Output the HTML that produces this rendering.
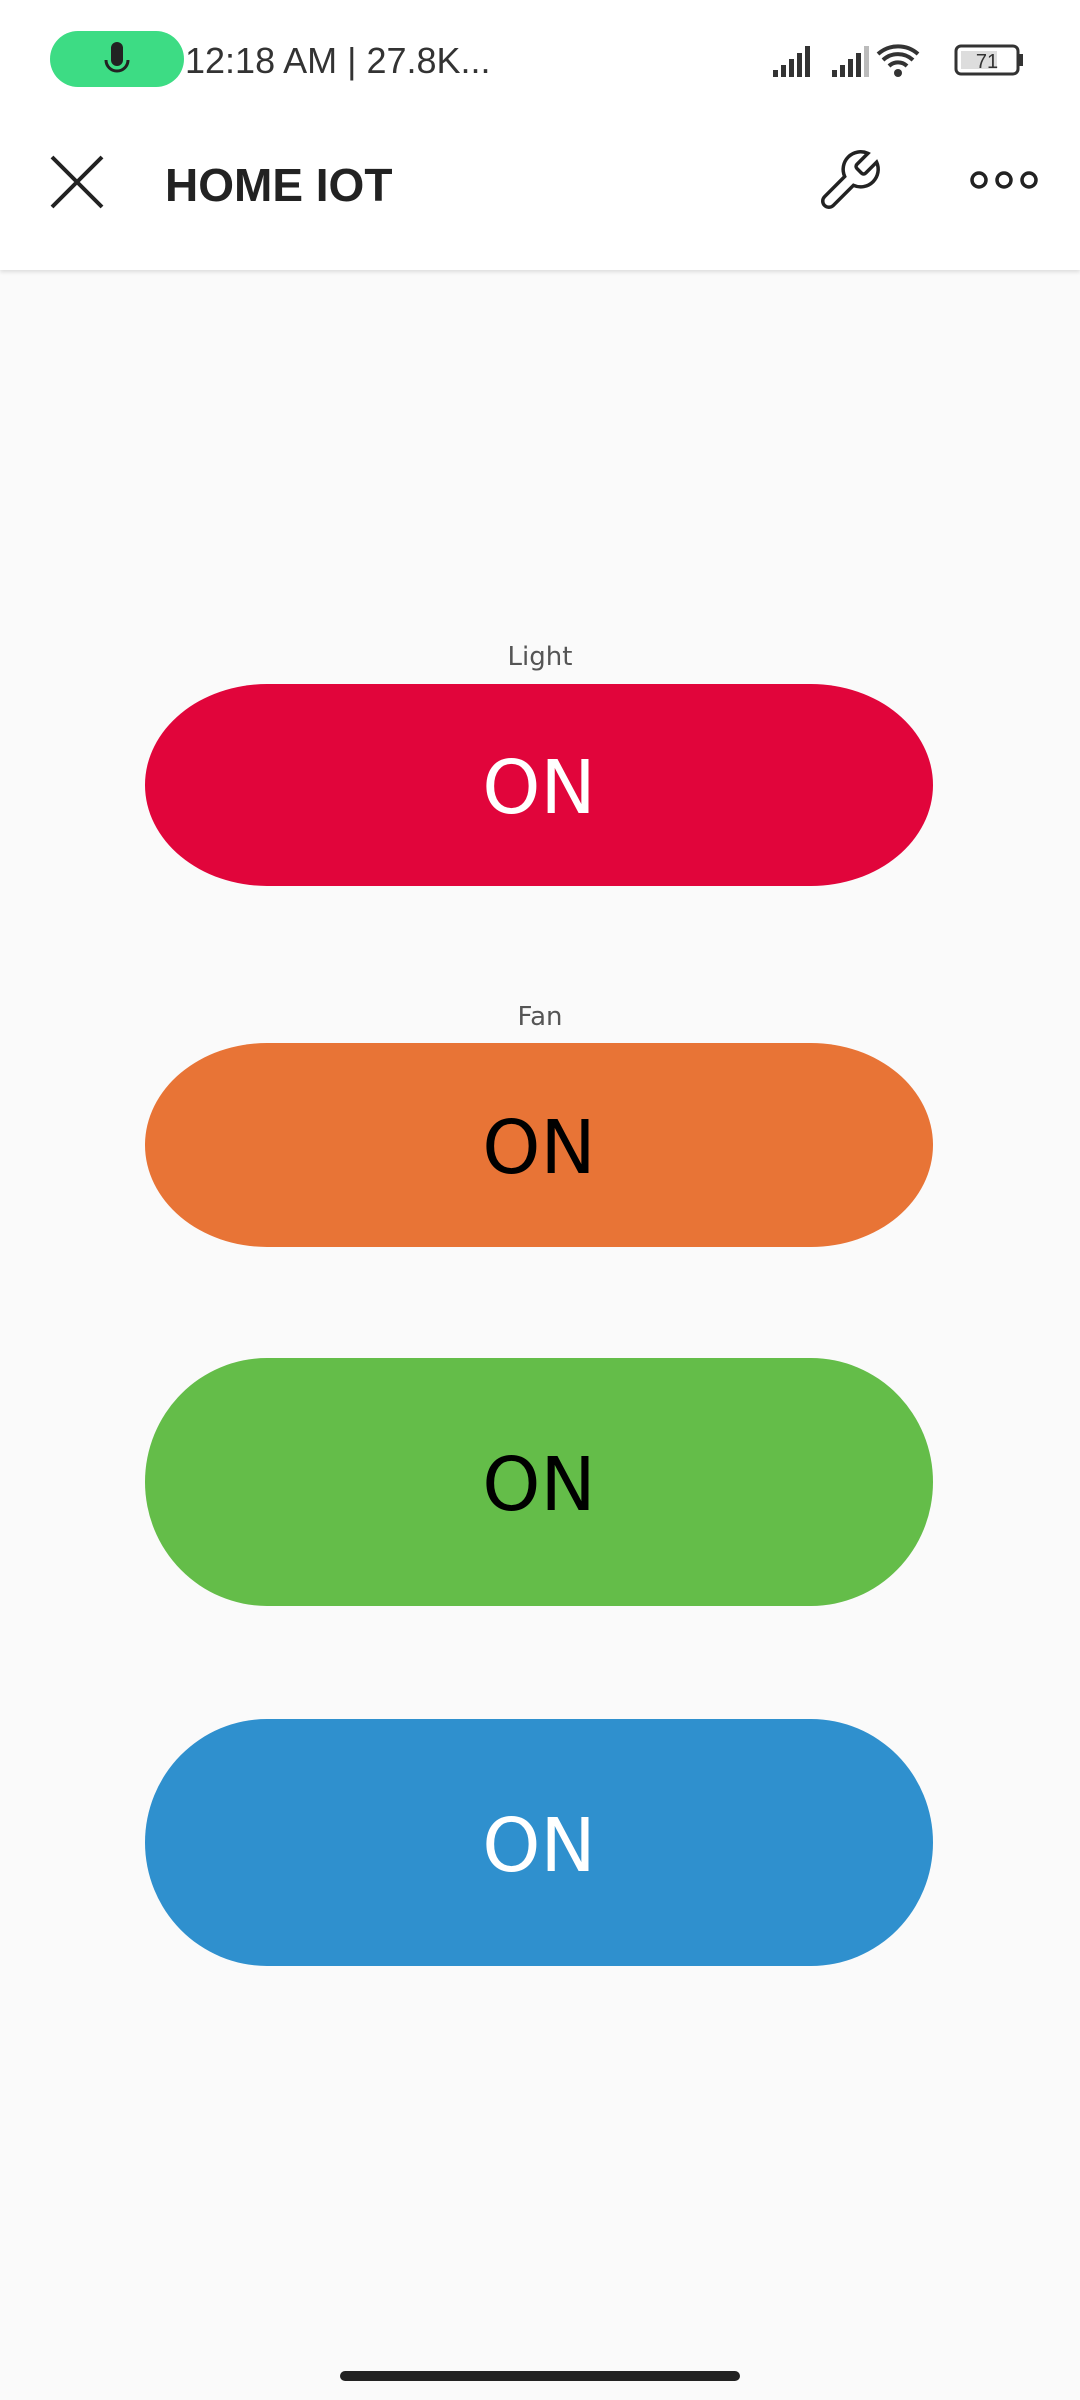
<!DOCTYPE html>
<html><head><meta charset="utf-8"><style>
*{margin:0;padding:0;box-sizing:border-box}
body{width:1080px;height:2400px;background:#fafafa;font-family:"Liberation Sans","DejaVu Sans",sans-serif;position:relative;overflow:hidden}
.hdr{position:absolute;left:0;top:0;width:1080px;height:270px;background:#fff;box-shadow:0 2px 4px rgba(0,0,0,.12)}
.abs{position:absolute}
.btn{position:absolute;left:145px;width:788px;border-radius:122px/50%;display:flex;align-items:center;justify-content:center;font-family:"DejaVu Sans",sans-serif;font-size:74px;padding-top:6px}
.lbl{position:absolute;left:0;width:1080px;text-align:center;font-family:"DejaVu Sans",sans-serif;font-size:26px;color:#555}
</style></head><body>
<div class="hdr">
 <div class="abs" style="left:50px;top:31px;width:134px;height:56px;border-radius:28px;background:#3ddc84"></div>
 <svg class="abs" style="left:98px;top:38px" width="38" height="44" viewBox="0 0 38 44"><rect x="13" y="4" width="12" height="24" rx="6" fill="#222"/><path d="M8 22a11 11 0 0 0 22 0" stroke="#222" stroke-width="3" fill="none"/></svg>
 <div class="abs" style="left:185px;top:40px;font-size:36px;color:#333">12:18 AM | 27.8K...</div>
 <svg class="abs" style="left:770px;top:40px" width="255" height="42" viewBox="0 0 255 42">
  <g fill="#333"><rect x="3" y="30" width="5" height="7"/><rect x="11" y="25" width="5" height="12"/><rect x="19" y="19" width="5" height="18"/><rect x="27" y="13" width="5" height="24"/><rect x="35" y="6" width="5" height="31"/>
  <rect x="62" y="30" width="5" height="7"/><rect x="70" y="25" width="5" height="12"/><rect x="78" y="19" width="5" height="18"/><rect x="86" y="13" width="5" height="24"/></g><rect x="94" y="6" width="5" height="31" fill="#bbb"/>
  <path d="M108 14a30 30 0 0 1 40 0M113 20a22 22 0 0 1 30 0M119 26a13 13 0 0 1 18 0" stroke="#333" stroke-width="4" fill="none"/><circle cx="128" cy="33" r="4" fill="#333"/>
  <rect x="186" y="6" width="62" height="28" rx="5" stroke="#333" stroke-width="3" fill="#fff"/><rect x="191" y="11" width="36" height="18" fill="#ddd"/><rect x="249" y="14" width="4" height="12" fill="#333"/>
  <text x="217" y="28" font-size="20" text-anchor="middle" fill="#333" font-family="Liberation Sans">71</text></svg>
 <svg class="abs" style="left:50px;top:155px" width="54" height="54" viewBox="0 0 54 54"><path d="M2 2L52 52M52 2L2 52" stroke="#222" stroke-width="4"/></svg>
 <div class="abs" style="left:165px;top:158px;font-size:46px;font-weight:bold;color:#222">HOME IOT</div>
 <svg class="abs" style="left:813px;top:146px" width="72" height="70" viewBox="0 0 24 24"><path d="M14.7 6.3a1 1 0 0 0 0 1.4l1.6 1.6a1 1 0 0 0 1.4 0l3.77-3.77a6 6 0 0 1-7.94 7.94l-6.91 6.91a2.12 2.12 0 0 1-3-3l6.91-6.91a6 6 0 0 1 7.94-7.940l-3.76 3.76z" stroke="#222" stroke-width="1.2" fill="none"/></svg>
 <svg class="abs" style="left:968px;top:168px" width="72" height="24" viewBox="0 0 72 24"><g stroke="#222" stroke-width="3.5" fill="none"><circle cx="11" cy="12" r="7"/><circle cx="36" cy="12" r="7"/><circle cx="61" cy="12" r="7"/></g></svg>
</div>
<div class="lbl" style="top:642px">Light</div>
<div class="btn" style="top:684px;height:202px;background:#e1053b;color:#fff">ON</div>
<div class="lbl" style="top:1002px">Fan</div>
<div class="btn" style="top:1043px;height:204px;background:#e87436;color:#000">ON</div>
<div class="btn" style="top:1358px;height:248px;background:#64bd49;color:#000">ON</div>
<div class="btn" style="top:1719px;height:247px;background:#2f90ce;color:#fff">ON</div>
<div class="abs" style="left:340px;top:2371px;width:400px;height:10px;border-radius:5px;background:#222"></div>
</body></html>
